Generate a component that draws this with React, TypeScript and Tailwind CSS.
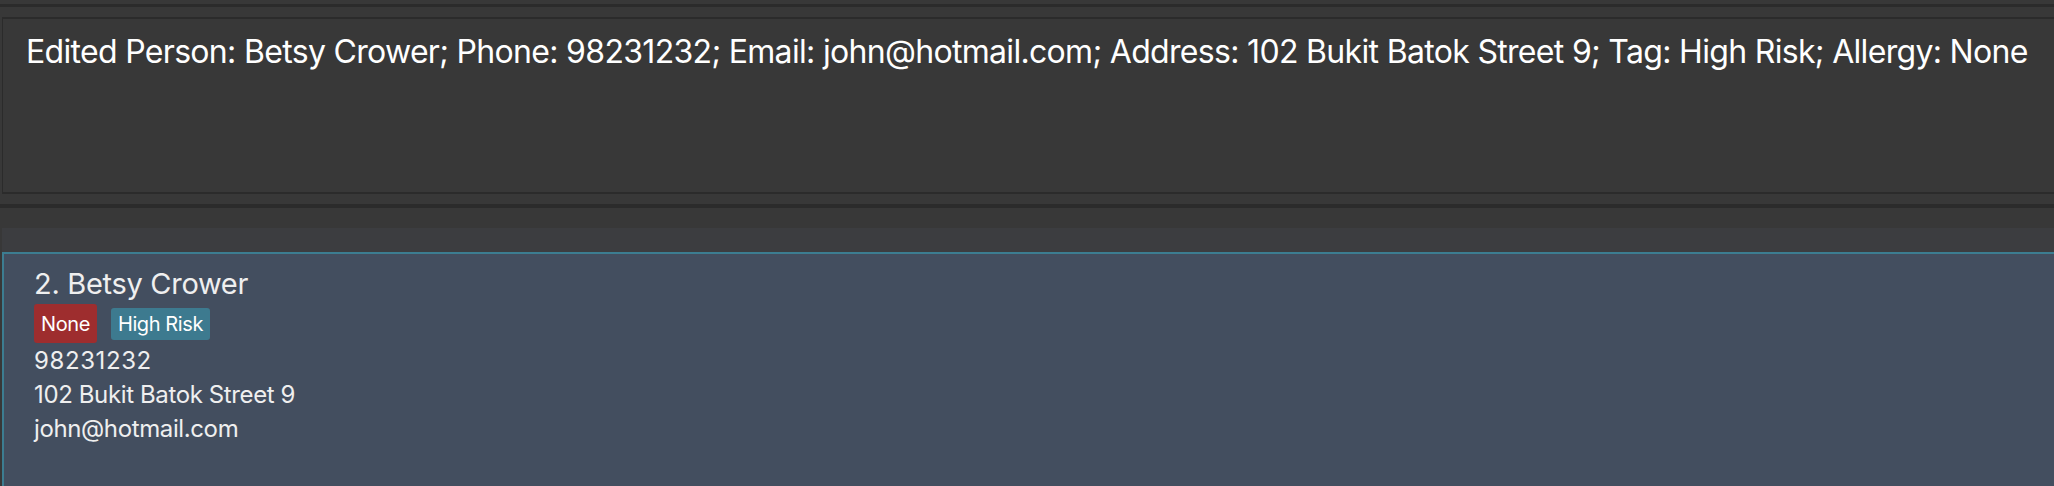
const result =
  "Edited Person: Betsy Crower; Phone: 98231232; Email: john@hotmail.com; Address: 102 Bukit Batok Street 9; Tag: High Risk; Allergy: None";

const person = {
  index: 2,
  name: "Betsy Crower",
  allergy: "None",
  tag: "High Risk",
  phone: "98231232",
  address: "102 Bukit Batok Street 9",
  email: "john@hotmail.com",
};

const ResultDisplay: React.FC<{ text: string }> = ({ text }) => (
  <div className="ml-[2px] -mr-[40px] h-[177px] border-y-2 border-l border-[#2b2b2b] pl-[23px] pt-[13px]">
    <p className="whitespace-nowrap text-[32px] leading-[40px] tracking-[-0.68px] text-white">
      {text}
    </p>
  </div>
);

const PersonCard: React.FC<{ p: typeof person }> = ({ p }) => (
  <div className="flex-1 border-l-2 border-t-2 border-[#3c7d91] bg-[#434e5f] pl-[30px] pt-[12px] text-[#efefef]">
    <div className="text-[29px] leading-[36px] tracking-[-0.3px]">
      {p.index}. {p.name}
    </div>
    <div className="mt-[2px] flex h-[39px] items-center gap-[14px] text-[20px] tracking-[-0.4px] text-white">
      <span className="flex h-[39px] items-center rounded-[3px] bg-[#9e2d2e] px-[7px]">
        {p.allergy}
      </span>
      <span className="flex h-[32px] items-center rounded-[3px] bg-[#3d7a8f] px-[7px]">
        {p.tag}
      </span>
    </div>
    <div className="mt-[1px] text-[24px] leading-[34px] tracking-[-0.38px]">
      <div className="tracking-[0.6px]">{p.phone}</div>
      <div>{p.address}</div>
      <div>{p.email}</div>
    </div>
  </div>
);

export default function App() {
  return (
    <div
      className="flex h-[486px] w-[2054px] flex-col overflow-hidden bg-[#383838]"
      style={{ fontFamily: "Inter, 'Noto Sans', sans-serif" }}
    >
      <div className="h-[4px]" />
      <div className="h-[3px] bg-[#2b2b2b]" />
      <div className="h-[10px]" />
      <ResultDisplay text={result} />
      <div className="h-[10px]" />
      <div className="h-[4px] bg-[#2b2b2b]" />
      <div className="h-[20px]" />
      <div className="ml-[2px] flex flex-1 flex-col bg-[#3c3d40] pt-[24px]">
        <PersonCard p={person} />
      </div>
    </div>
  );
}
